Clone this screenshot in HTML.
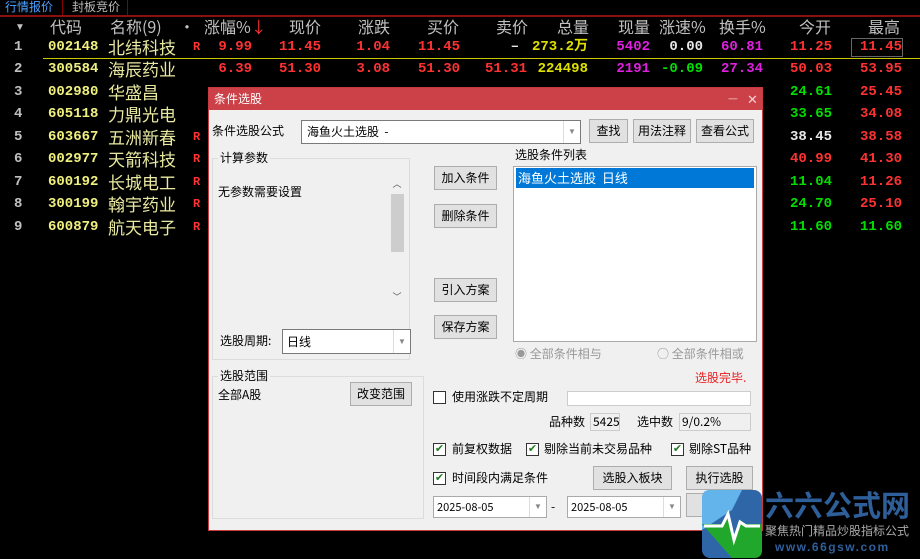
<!DOCTYPE html>
<html><head><meta charset="utf-8"><style>
*{margin:0;padding:0;box-sizing:border-box}
body{width:920px;height:559px;background:#000;position:relative;overflow:hidden;font-family:"Liberation Sans","Noto Sans CJK SC",sans-serif;font-size:12px}
.a{position:absolute;white-space:nowrap}
.h{color:#c0c0c0;font-size:16px;top:15px;line-height:22px;font-family:"Noto Sans CJK SC",sans-serif}
.r{font-size:14px;font-weight:bold;line-height:22px;font-family:"Liberation Mono","Noto Sans CJK SC",monospace}
.n{font-size:17px;color:#e8e8a0;line-height:22px;font-family:"Noto Sans CJK SC",sans-serif}
.y{color:#f0f080}.rd{color:#ff3232}.g{color:#00e000}.w{color:#e8e8e8}.m{color:#e020e0}.yl{color:#e0e000}
.dl{font-size:12px;color:#000;font-family:"Noto Sans CJK SC",sans-serif;line-height:16px}
.btn{position:absolute;background:#e1e1e1;border:1px solid #adadad;text-align:center;font-family:"Noto Sans CJK SC",sans-serif;font-size:12px;color:#000}
.box{position:absolute;background:#fff;border:1px solid #7a7a7a}
.grp{position:absolute;border:1px solid #dcdcdc}
.cb{position:absolute;width:13px;height:13px;border:1px solid #333;background:#fff;font-size:11px;line-height:11px;text-align:center;color:#217a21}
.dd{position:absolute;top:0;right:0;width:17px;height:100%;border-left:1px solid #ddd;color:#888;font-size:8px;text-align:center}
</style></head><body>
<div class="a" style="left:0;top:0;width:150px;height:15px;font-size:12px;line-height:14px;color:#4aa0ff;padding-left:5px;font-family:'Noto Sans CJK SC'">行情报价</div>
<div class="a" style="left:62px;top:0;width:1px;height:15px;background:#800"></div>
<div class="a" style="left:72px;top:0;font-size:12px;line-height:14px;color:#bbb;font-family:'Noto Sans CJK SC'">封板竞价</div>
<div class="a" style="left:127px;top:0;width:1px;height:15px;background:#800"></div>
<div class="a" style="left:0;top:15px;width:920px;height:2px;background:#8a1010"></div>
<div class="a" style="left:15px;top:22px;color:#c0c0c0;font-size:10px">▼</div>
<div class="a h" style="left:50px">代码</div>
<div class="a h" style="left:110px">名称(9)</div>
<div class="a h" style="left:179px">•</div>
<div class="a h" style="left:204px">涨幅%<span style="color:#f33">↓</span></div>
<div class="a h" style="left:289px">现价</div>
<div class="a h" style="left:358px">涨跌</div>
<div class="a h" style="left:427px">买价</div>
<div class="a h" style="left:496px">卖价</div>
<div class="a h" style="left:557px">总量</div>
<div class="a h" style="left:618px">现量</div>
<div class="a h" style="left:659px">涨速%</div>
<div class="a h" style="left:719px">换手%</div>
<div class="a h" style="left:799px">今开</div>
<div class="a h" style="left:868px">最高</div>
<div class="a" style="left:43px;top:58px;width:877px;height:1px;background:#c8c800"></div>
<div class="a" style="left:851px;top:38px;width:52px;height:19px;border:1px solid #666"></div>
<div id="rows"></div>
<script>
var d=[["1","002148","北纬科技","R"],["2","300584","海辰药业",""],["3","002980","华盛昌",""],["4","605118","力鼎光电",""],["5","603667","五洲新春","R"],["6","002977","天箭科技","R"],["7","600192","长城电工","R"],["8","300199","翰宇药业","R"],["9","600879","航天电子","R"]];
var ys=[36,58,81,103,126,148,171,193,216];
var o=[["11.25","rd","11.45","rd"],["50.03","rd","53.95","rd"],["24.61","g","25.45","rd"],["33.65","g","34.08","rd"],["38.45","w","38.58","rd"],["40.99","rd","41.30","rd"],["11.04","g","11.26","rd"],["24.70","g","25.10","rd"],["11.60","g","11.60","g"]];
var h="";
for(var i=0;i<9;i++){var y=ys[i];
h+='<div class="a r" style="left:14px;top:'+y+'px;color:#c0c0c0">'+d[i][0]+'</div>';
h+='<div class="a r y" style="left:48px;top:'+y+'px">'+d[i][1]+'</div>';
h+='<div class="a n" style="left:108px;top:'+y+'px">'+d[i][2]+'</div>';
if(d[i][3])h+='<div class="a r rd" style="left:193px;top:'+y+'px;font-size:12px">R</div>';
h+='<div class="a r '+o[i][1]+'" style="right:88px;top:'+y+'px">'+o[i][0]+'</div>';
h+='<div class="a r '+o[i][3]+'" style="right:18px;top:'+y+'px">'+o[i][2]+'</div>';}
function c(t,cl,r,y){h+='<div class="a r '+cl+'" style="right:'+(920-r)+'px;top:'+y+'px">'+t+'</div>';}
c("9.99","rd",252,36);c("11.45","rd",321,36);c("1.04","rd",390,36);c("11.45","rd",460,36);c("–","w",519,36);c("273.2万","yl",588,36);c("5402","m",650,36);c("0.00","w",703,36);c("60.81","m",763,36);
c("6.39","rd",252,58);c("51.30","rd",321,58);c("3.08","rd",390,58);c("51.30","rd",460,58);c("51.31","rd",527,58);c("224498","yl",588,58);c("2191","m",650,58);c("-0.09","g",703,58);c("27.34","m",763,58);
document.getElementById("rows").innerHTML=h;
</script>
<!-- dialog -->
<div class="a" style="left:208px;top:87px;width:555px;height:444px;background:#f0f0f0;border:1px solid #c83a40">
<div class="a" style="left:0;top:0;width:553px;height:22px;background:#cc4047;color:#fff;font-family:'Noto Sans CJK SC';font-size:12px;line-height:22px;padding-left:5px">条件选股<span style="position:absolute;left:519px;top:-1px;font-size:11px;color:#f4d0d0">—</span><span style="position:absolute;left:538px;top:0;font-size:13px;color:#f4d0d0">✕</span></div>
</div>
<div class="a dl" style="left:212px;top:123px">条件选股公式</div>
<div class="box" style="left:301px;top:120px;width:280px;height:24px"><span class="dl" style="position:absolute;left:5px;top:3px">海鱼火土选股 &nbsp;-</span><div class="dd" style="line-height:22px">▼</div></div>
<div class="btn" style="left:589px;top:119px;width:39px;height:24px;line-height:22px">查找</div>
<div class="btn" style="left:633px;top:119px;width:58px;height:24px;line-height:22px">用法注释</div>
<div class="btn" style="left:696px;top:119px;width:58px;height:24px;line-height:22px">查看公式</div>
<div class="grp" style="left:212px;top:158px;width:198px;height:202px"></div>
<div class="a dl" style="left:218px;top:150px;background:#f0f0f0;padding:0 2px">计算参数</div>
<div class="a dl" style="left:218px;top:184px">无参数需要设置</div>
<div class="a" style="left:390px;top:177px;width:14px;height:126px;background:#f0f0f0"><div style="position:absolute;top:17px;left:1px;width:13px;height:58px;background:#cdcdcd"></div><div style="position:absolute;top:0;width:14px;text-align:center;font-size:9px;color:#555">︿</div><div style="position:absolute;bottom:0;width:14px;text-align:center;font-size:9px;color:#555">﹀</div></div>
<div class="a dl" style="left:220px;top:333px">选股周期:</div>
<div class="box" style="left:282px;top:329px;width:129px;height:25px"><span class="dl" style="position:absolute;left:4px;top:4px">日线</span><div class="dd" style="line-height:23px">▼</div></div>
<div class="btn" style="left:434px;top:166px;width:63px;height:24px;line-height:22px">加入条件</div>
<div class="btn" style="left:434px;top:204px;width:63px;height:24px;line-height:22px">删除条件</div>
<div class="btn" style="left:434px;top:278px;width:63px;height:24px;line-height:22px">引入方案</div>
<div class="btn" style="left:434px;top:315px;width:63px;height:24px;line-height:22px">保存方案</div>
<div class="a dl" style="left:515px;top:147px">选股条件列表</div>
<div class="box" style="left:513px;top:166px;width:244px;height:176px;border-color:#aaa"><div style="position:absolute;left:2px;top:1px;width:238px;height:20px;background:#0078d7;color:#fff;font-family:'Noto Sans CJK SC';font-size:13px;line-height:20px;padding-left:2px">海鱼火土选股 &nbsp;日线</div></div>
<div class="a dl" style="left:515px;top:346px;color:#999">◉ 全部条件相与</div>
<div class="a dl" style="left:657px;top:346px;color:#999">○ 全部条件相或</div>
<div class="a dl" style="left:695px;top:370px;color:#e82020">选股完毕.</div>
<div class="grp" style="left:212px;top:376px;width:212px;height:143px"></div>
<div class="a dl" style="left:218px;top:368px;background:#f0f0f0;padding:0 2px">选股范围</div>
<div class="a dl" style="left:218px;top:387px">全部A股</div>
<div class="btn" style="left:350px;top:382px;width:62px;height:24px;line-height:22px">改变范围</div>
<div class="cb" style="left:433px;top:391px"></div>
<div class="a dl" style="left:452px;top:389px">使用涨跌不定周期</div>
<div class="box" style="left:567px;top:391px;width:184px;height:15px;border-color:#ccc"></div>
<div class="a dl" style="left:549px;top:414px">品种数</div>
<div class="box" style="left:590px;top:413px;width:30px;height:18px;background:#f0f0f0;border-color:#ccc"><span class="dl" style="position:absolute;left:2px;top:0">5425</span></div>
<div class="a dl" style="left:637px;top:414px">选中数</div>
<div class="box" style="left:679px;top:413px;width:72px;height:18px;background:#f0f0f0;border-color:#ccc"><span class="dl" style="position:absolute;left:2px;top:0">9/0.2%</span></div>
<div class="cb" style="left:433px;top:443px">✔</div><div class="a dl" style="left:452px;top:441px">前复权数据</div>
<div class="cb" style="left:526px;top:443px">✔</div><div class="a dl" style="left:544px;top:441px">剔除当前未交易品种</div>
<div class="cb" style="left:671px;top:443px">✔</div><div class="a dl" style="left:689px;top:441px">剔除ST品种</div>
<div class="cb" style="left:433px;top:472px">✔</div><div class="a dl" style="left:452px;top:470px">时间段内满足条件</div>
<div class="btn" style="left:593px;top:466px;width:79px;height:24px;line-height:22px">选股入板块</div>
<div class="btn" style="left:686px;top:466px;width:67px;height:24px;line-height:22px">执行选股</div>
<div class="box" style="left:433px;top:496px;width:114px;height:22px;border-color:#aaa"><span class="dl" style="position:absolute;left:3px;top:2px;font-size:11px">2025-08-05</span><div class="dd" style="line-height:20px">▼</div></div>
<div class="a dl" style="left:551px;top:499px">-</div>
<div class="box" style="left:567px;top:496px;width:114px;height:22px;border-color:#aaa"><span class="dl" style="position:absolute;left:3px;top:2px;font-size:11px">2025-08-05</span><div class="dd" style="line-height:20px">▼</div></div>
<div class="btn" style="left:686px;top:493px;width:67px;height:24px;line-height:22px">关闭</div>
<!-- logo -->
<svg class="a" style="left:702px;top:490px" width="60" height="68" viewBox="0 0 60 68">
<rect x="0" y="0" width="60" height="68" rx="8" fill="#2e66a8"/>
<path d="M0 8 Q0 0 8 0 H40 L30 20 L0 40Z" fill="#63b4ea"/>
<path d="M0 34 L20 34 L26 22 L32 46 L38 30 L44 34 L60 34 V60 Q60 68 52 68 H30 Z" fill="#21a72c"/>
<path d="M2 36 L20 36 L26 24 L32 50 L38 32 L44 36 L58 36" fill="none" stroke="#fff" stroke-width="3"/>
</svg>
<div class="a" style="left:765px;top:484px;font-size:29px;font-weight:bold;color:#2f5f9a;font-family:'Noto Sans CJK SC',sans-serif;letter-spacing:0;line-height:40px">六六公式网</div>
<div class="a" style="left:765px;top:524px;font-size:12px;color:#aaa;font-family:'Noto Sans CJK SC',sans-serif;line-height:14px">聚焦热门精品炒股指标公式</div>
<div class="a" style="left:775px;top:540px;font-size:12px;font-weight:bold;color:#2f5f9a;letter-spacing:1.5px;line-height:14px">www.66gsw.com</div>
</body></html>
